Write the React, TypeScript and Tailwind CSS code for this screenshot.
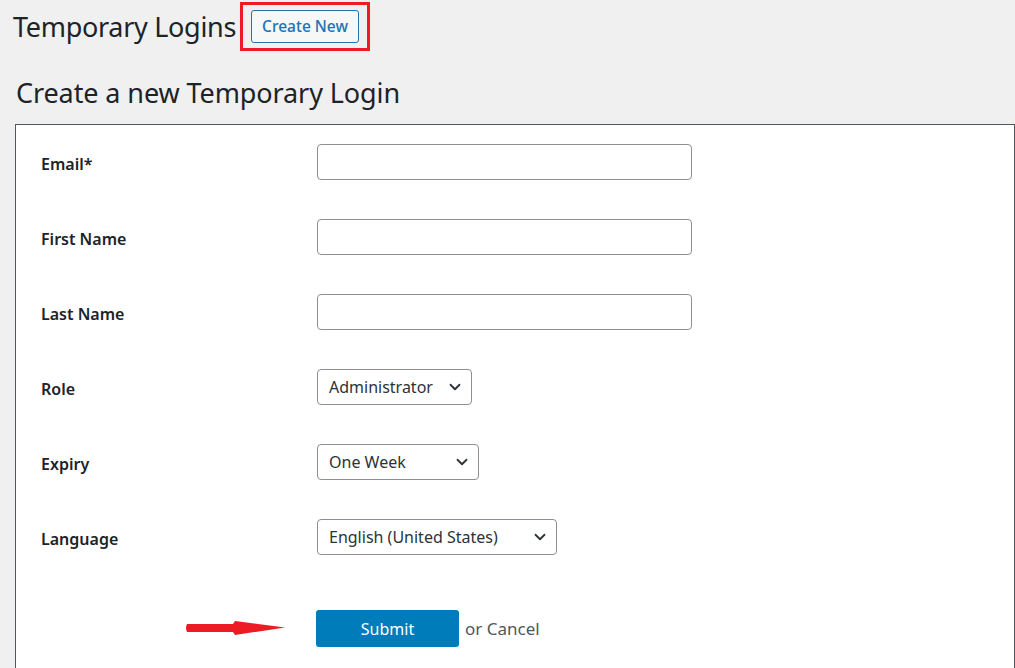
import React from 'react';

const Chevron: React.FC = () => (
  <svg width="18" height="18" viewBox="0 0 20 20" className="shrink-0">
    <path d="M5 7.5 L10 12.5 L15 7.5" fill="none" stroke="#2c3338" strokeWidth="2" strokeLinecap="round" strokeLinejoin="round" />
  </svg>
);

const App: React.FC = () => {
  const textFields = ['Email*', 'First Name', 'Last Name'];
  const selects = [
    { label: 'Role', value: 'Administrator', width: 'w-[155px]' },
    { label: 'Expiry', value: 'One Week', width: 'w-[162px]' },
    { label: 'Language', value: 'English (United States)', width: 'w-[240px]' },
  ];

  return (
    <div className="h-[668px] w-[1015px] overflow-hidden bg-[#f0f0f1] text-[#1d2327]" style={{ fontFamily: '"Noto Sans", "Open Sans", sans-serif' }}>
      {/* Header */}
      <div className="flex items-center pl-[13px] pt-[2px]">
        <h1 className="text-[27px] leading-[30px] font-normal tracking-[-0.3px]">Temporary Logins</h1>
        <div className="ml-[4px] border-[3px] border-[#ed1c24] px-[8px] py-[5px]">
          <button className="h-[33px] rounded-[3px] border border-[#2271b1] bg-[#f6f7f7] px-[10px] text-[15.5px] font-medium text-[#2271b1]">
            Create New
          </button>
        </div>
      </div>

      <h2 className="ml-[16px] mt-[24px] text-[27px] leading-[36px] font-normal tracking-[-0.1px]">Create a new Temporary Login</h2>

      {/* Form box */}
      <div className="ml-[15px] mt-[13px] h-[600px] border border-[#50575e] bg-white pl-[25px] pt-[19px]">
        <div className="flex flex-col gap-[39px]">
          {textFields.map((label) => (
            <div key={label} className="flex items-center">
              <label className="w-[276px] pt-[4px] text-[16px] font-semibold">{label}</label>
              <input className="h-[36px] w-[375px] rounded-[4px] border border-[#8c8f94] bg-white px-2 outline-none" />
            </div>
          ))}
          {selects.map((s) => (
            <div key={s.label} className="flex items-center">
              <label className="w-[276px] pt-[4px] text-[16px] font-semibold">{s.label}</label>
              <div className={`flex h-[36px] ${s.width} items-center justify-between rounded-[4px] border border-[#8c8f94] bg-white pl-[11px] pr-[7px] text-[16px] text-[#2c3338]`}>
                <span>{s.value}</span>
                <Chevron />
              </div>
            </div>
          ))}
        </div>

        <div className="mt-[55px] flex items-center">
          <div className="flex w-[275px] justify-end pr-[29px]">
            <svg width="102" height="20" viewBox="0 0 102 20">
              <path d="M2 5 L48 5 L50 2 L100 8.5 L50 16 L48 13 L2 13 Q0 9 2 5 Z" fill="#ed1c24" />
            </svg>
          </div>
          <button className="h-[37px] w-[143px] rounded-[3px] bg-[#007cba] text-[16px] text-white">Submit</button>
          <span className="ml-[6px] text-[17px] text-[#50575e]">or Cancel</span>
        </div>
      </div>
    </div>
  );
};

export default App;
